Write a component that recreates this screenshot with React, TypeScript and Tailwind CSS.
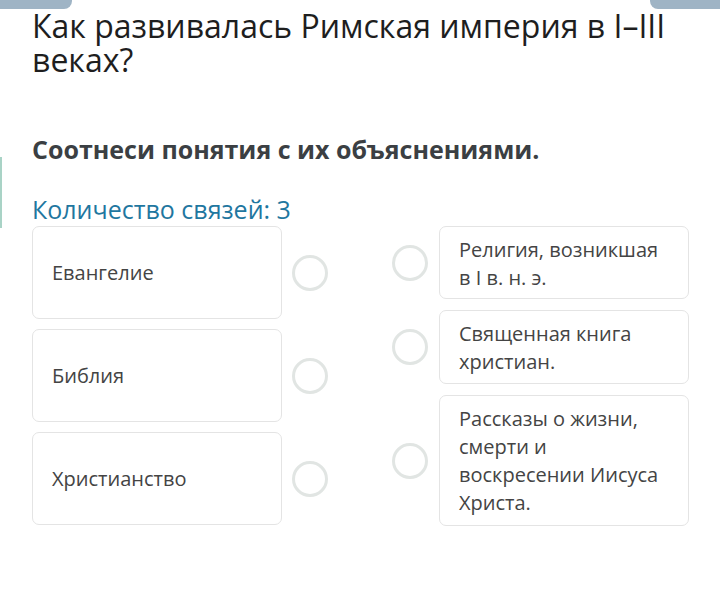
export default function App() {
  const left = ['Евангелие', 'Библия', 'Христианство'];
  const right = [
    { text: 'Религия, возникшая в I в. н. э.', h: 'h-[73px]' },
    { text: 'Священная книга христиан.', h: 'h-[74px]' },
    { text: 'Рассказы о жизни, смерти и воскресении Иисуса Христа.', h: 'h-[131px]' },
  ];

  return (
    <div className="relative w-[720px] h-[593px] bg-white overflow-hidden" style={{ fontFamily: '"Open Sans", sans-serif' }}>
      <div className="absolute left-0 top-0 w-[72px] h-[9px] bg-[#9fb4c5] rounded-br-[8px]" />
      <div className="absolute right-0 top-0 w-[70px] h-[9px] bg-[#9fb4c5] rounded-bl-[8px]" />
      <div className="absolute left-0 top-[157px] w-[2px] h-[71px] bg-[#a9d3c6]" />

      <div className="px-[32px] pt-[9px]">
        <h1 className="text-[32px] leading-[34px] text-[#1e1e1e] font-normal">Как развивалась Римская империя в I–III веках?</h1>
        <h2 className="mt-[57px] text-[25px] leading-[30px] font-bold text-[#3b3f43]">Соотнеси понятия с их объяснениями.</h2>
        <div className="mt-[30px] text-[25px] leading-[30px] text-[#1f77a0]">Количество связей: 3</div>

        <div className="mt-[2px] flex">
          <div className="flex flex-col gap-[10px]">
            {left.map(t => (
              <div key={t} className="flex items-center">
                <div className="w-[250px] h-[93px] border border-[#e4e4e4] rounded-[7px] px-[19px] flex items-center text-[20px] text-[#444]">{t}</div>
                <div className="ml-[10px] w-[36px] h-[36px] rounded-full border-[3px] border-[#e1e5e3]" />
              </div>
            ))}
          </div>
          <div className="ml-[64px] flex flex-col gap-[11px]">
            {right.map(r => (
              <div key={r.text} className="flex items-center">
                <div className="w-[36px] h-[36px] rounded-full border-[3px] border-[#e1e5e3]" />
                <div className={`ml-[11px] w-[250px] ${r.h} border border-[#e4e4e4] rounded-[7px] px-[19px] pt-[9px] text-[20px] leading-[28px] text-[#444]`}>{r.text}</div>
              </div>
            ))}
          </div>
        </div>
      </div>
    </div>
  );
}
